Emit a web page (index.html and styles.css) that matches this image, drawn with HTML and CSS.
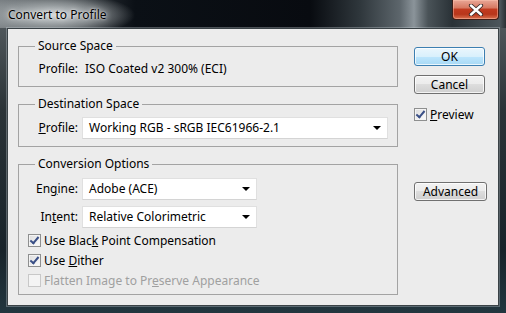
FILE: index.html
```html
<!DOCTYPE html>
<html lang="en">
<head>
  <meta charset="UTF-8" />
  <title>Convert to Profile</title>
  <link rel="stylesheet" href="styles.css">
</head>
<body>
  <div class="window">
    <div class="titlebar">
      <span class="title">Convert to Profile</span>
      <button class="close" title="Close">
        <svg width="16" height="12" viewBox="0 0 16 12">
          <path d="M3 1.5 L13 10.5 M13 1.5 L3 10.5" stroke="#3a2a28" stroke-width="4.2" stroke-linecap="round"/>
          <path d="M3 1.5 L13 10.5 M13 1.5 L3 10.5" stroke="#ffffff" stroke-width="2.4" stroke-linecap="round"/>
        </svg>
      </button>
    </div>

    <div class="client">
      <div class="main">
        <fieldset class="group source">
          <legend>Source Space</legend>
          <div class="row">
            <span class="label">Profile:</span>
            <span class="value">ISO Coated v2 300% (ECI)</span>
          </div>
        </fieldset>

        <fieldset class="group destination">
          <legend>Destination Space</legend>
          <div class="row">
            <span class="label"><u>P</u>rofile:</span>
            <div class="select wide"><span>Working RGB - sRGB IEC61966-2.1</span><span class="arrow"></span></div>
          </div>
        </fieldset>

        <fieldset class="group conversion">
          <legend>Conversion Options</legend>
          <div class="row">
            <span class="label">En<u>g</u>ine:</span>
            <div class="select"><span>Adobe (ACE)</span><span class="arrow"></span></div>
          </div>
          <div class="row">
            <span class="label">In<u>t</u>ent:</span>
            <div class="select"><span>Relative Colorimetric</span><span class="arrow"></span></div>
          </div>
          <div class="checks">
            <label class="check"><span class="box checked"></span><span>Use Blac<u>k</u> Point Compensation</span></label>
            <label class="check"><span class="box checked"></span><span>Use <u>D</u>ither</span></label>
            <label class="check disabled"><span class="box"></span><span>Flatten Image to Pr<u>e</u>serve Appearance</span></label>
          </div>
        </fieldset>
      </div>

      <div class="side">
        <button class="btn default">OK</button>
        <button class="btn cancel">Cancel</button>
        <label class="check preview"><span class="box checked"></span><span><u>P</u>review</span></label>
        <button class="btn advanced">Advanced</button>
      </div>
    </div>
  </div>
</body>
</html>
```

FILE: styles.css
```css
* {
  box-sizing: border-box;
  margin: 0;
  padding: 0;
}

body {
  width: 506px;
  height: 313px;
  overflow: hidden;
  font-family: 'Noto Sans', 'Open Sans', sans-serif;
  font-size: 12px;
  color: #000;
}

.window {
  width: 506px;
  height: 313px;
  display: flex;
  flex-direction: column;
  background: linear-gradient(to bottom, #5b6266 0, #2b3337 35%, #18232a 80%, #22363f 100%);
}

.titlebar {
  height: 28px;
  flex-shrink: 0;
  display: flex;
  align-items: flex-start;
  padding: 0 7px 0 8px;
  background:
    radial-gradient(ellipse 80px 22px at 55px 15px, rgba(215, 220, 222, 0.95), rgba(180, 186, 188, 0.6) 55%, rgba(120, 126, 130, 0) 100%),
    linear-gradient(to right, #767c80 0, #4a5054 40px, #0b1016 135px, #080b10 310px, #2f373c 360px, #5d666c 400px, #8b949a 414px, #4a5358 428px, #2a3237 452px, #4c565c 500px, #2a3034 506px);
}

.title {
  line-height: 30px;
  color: #000;
  text-shadow: 0 0 6px rgba(255, 255, 255, 0.9), 0 0 2px rgba(255, 255, 255, 0.8);
}

.close {
  margin-left: auto;
  width: 47px;
  height: 20px;
  border: 1px solid #3e1d17;
  border-top: none;
  border-radius: 0 0 4px 4px;
  background: linear-gradient(to bottom, #e9a797 0, #d77a63 40%, #c13a1f 50%, #b8361b 75%, #d9714f 100%);
  box-shadow: inset 0 0 0 1px rgba(255, 200, 180, 0.45);
  display: flex;
  align-items: center;
  justify-content: center;
}

.client {
  flex: 1;
  margin: 0 7px 7px 7px;
  background: #ececec;
  border: 1px solid #3a4246;
  box-shadow: 0 0 0 1px rgba(200, 210, 215, 0.35);
  display: flex;
}

.main {
  width: 380px;
  margin-left: 10px;
  padding-top: 9px;
}

.group {
  width: 380px;
  border: 1px solid #a3a3a3;
  padding: 0;
}

.group + .group {
  margin-top: 9px;
}

.group legend {
  margin-left: 16px;
  padding: 0 3px;
  line-height: 16px;
}

.source {
  padding: 7px 0 9px;
}

.destination {
  padding: 5px 0 7px;
}

.conversion {
  padding: 6px 0 4px;
}

.row {
  display: flex;
  align-items: center;
  line-height: 16px;
}

.row + .row {
  margin-top: 6px;
}

.label {
  width: 59px;
  text-align: right;
  flex-shrink: 0;
}

.value {
  margin-left: 7px;
}

.select {
  margin-left: 4px;
  width: 175px;
  height: 22px;
  padding: 0 6px;
  background: #fff;
  border: 1px solid #e0e0e0;
  border-bottom-color: #d4d4d4;
  display: flex;
  align-items: center;
  justify-content: space-between;
}

.select.wide {
  width: 306px;
}

.arrow {
  width: 0;
  height: 0;
  border-left: 4px solid transparent;
  border-right: 4px solid transparent;
  border-top: 4px solid #000;
}

.checks {
  margin-top: 2px;
  padding-left: 9px;
}

.check {
  display: flex;
  align-items: center;
  height: 20px;
  gap: 3px;
}

.box {
  width: 13px;
  height: 13px;
  border: 1px solid #8e8f8f;
  background: linear-gradient(135deg, #dcdcdc, #fdfdfd);
  box-shadow: inset 0 0 0 1px #f4f4f4;
  position: relative;
  flex-shrink: 0;
}

.box.checked::after {
  content: "";
  position: absolute;
  left: 3px;
  top: 0;
  width: 3px;
  height: 7px;
  border-right: 2px solid #3a4f86;
  border-bottom: 2px solid #3a4f86;
  transform: rotate(40deg);
}

.check.disabled {
  color: #a0a0a0;
}

.check.disabled .box {
  border-color: #c8c8c8;
  background: #f4f4f4;
  box-shadow: none;
}

.side {
  width: 73px;
  margin-left: 16px;
  padding-top: 18px;
  display: flex;
  flex-direction: column;
  align-items: flex-start;
}

.btn {
  width: 71px;
  height: 19px;
  font: inherit;
  line-height: 16px;
  color: #000;
  border: 1px solid #707070;
  border-radius: 3px;
  background: linear-gradient(to bottom, #f2f2f2 0, #ebebeb 50%, #dddddd 50%, #cfcfcf 100%);
  box-shadow: inset 0 0 0 1px rgba(255, 255, 255, 0.75);
}

.btn.default {
  border-color: #3c7fb1;
  background: linear-gradient(to bottom, #eaf6fd 0, #d9f0fc 50%, #bee6fd 50%, #a7d9f5 100%);
}

.btn.cancel {
  margin-top: 9px;
}

.preview {
  margin-top: 12px;
  height: 16px;
}

.btn.advanced {
  width: 73px;
  margin-top: 60px;
}
```
